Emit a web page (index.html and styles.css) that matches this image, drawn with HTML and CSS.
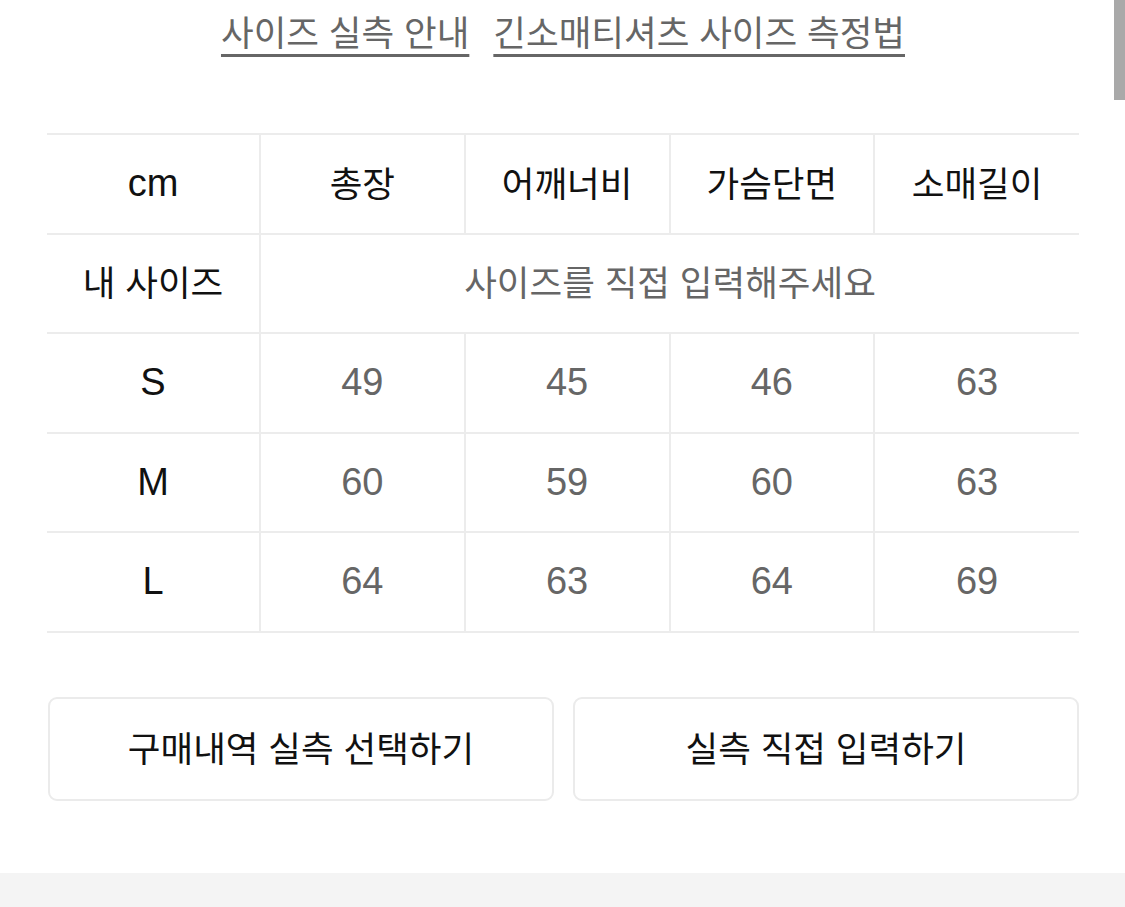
FILE: index.html
```html
<!DOCTYPE html>
<html lang="ko">
<head>
<meta charset="utf-8">
<title>사이즈 실측 안내</title>
<link rel="stylesheet" href="styles.css">
</head>
<body>
<div class="page">
  <nav class="links">
    <a class="link" href="#">사이즈 실측 안내</a>
    <a class="link" href="#">긴소매티셔츠 사이즈 측정법</a>
  </nav>

  <table class="size-table">
    <tr>
      <th class="first latin">cm</th>
      <th>총장</th>
      <th>어깨너비</th>
      <th>가슴단면</th>
      <th>소매길이</th>
    </tr>
    <tr>
      <th class="first">내 사이즈</th>
      <td colspan="4" class="placeholder">사이즈를 직접 입력해주세요</td>
    </tr>
    <tr>
      <th class="first latin">S</th>
      <td class="latin">49</td><td class="latin">45</td><td class="latin">46</td><td class="latin">63</td>
    </tr>
    <tr>
      <th class="first latin">M</th>
      <td class="latin">60</td><td class="latin">59</td><td class="latin">60</td><td class="latin">63</td>
    </tr>
    <tr>
      <th class="first latin">L</th>
      <td class="latin">64</td><td class="latin">63</td><td class="latin">64</td><td class="latin">69</td>
    </tr>
  </table>

  <div class="actions">
    <button class="btn">구매내역 실측 선택하기</button>
    <button class="btn">실측 직접 입력하기</button>
  </div>
</div>
<div class="footer"></div>
<div class="scrollbar"></div>
</body>
</html>
```

FILE: styles.css
```css
* { box-sizing: border-box; }
html, body { margin: 0; padding: 0; background: #fff; }
body {
  font-family: "Liberation Sans", "Noto Sans CJK KR", sans-serif;
  color: #111;
  position: relative;
  min-height: 907px;
  overflow: hidden;
}
.page {
  padding: 0 46px 0 47px;
}
.links {
  display: flex;
  justify-content: center;
  gap: 24px;
  padding-top: 9px;
  height: 133px;
}
.link {
  font-size: 35.5px;
  color: #666;
  text-decoration: underline;
  text-decoration-thickness: 3px;
  text-underline-offset: 8px;
  line-height: 50px;
  height: 50px;
}
.size-table {
  width: 1032px;
  border-collapse: collapse;
  table-layout: fixed;
}
.size-table th, .size-table td {
  height: 99.5px;
  text-align: center;
  vertical-align: middle;
  border-top: 2px solid #ececec;
  border-bottom: 2px solid #ececec;
  border-left: 2px solid #ececec;
  font-size: 35.5px;
  font-weight: normal;
  padding: 0 0 5px;
}
.size-table th { color: #111; }
.size-table td { color: #666; }
.size-table .latin { font-size: 38px; padding: 0; }
.size-table tr > :first-child { border-left: none; }
.size-table .first { width: 213px; }
.actions {
  display: flex;
  gap: 19px;
  margin-top: 64px;
  padding-left: 1px;
}
.btn {
  flex: 1;
  height: 104px;
  background: #fff;
  border: 2px solid #ebebeb;
  border-radius: 9px;
  font-family: "Liberation Sans", "Noto Sans CJK KR", sans-serif;
  font-size: 35.5px;
  color: #111;
  padding: 0 0 4px;
}
.footer {
  margin-top: 72px;
  height: 40px;
  background: #f4f4f4;
}
.scrollbar {
  position: absolute;
  top: 0;
  right: 0;
  width: 11px;
  height: 100px;
  background: #a9a9a9;
}
```
